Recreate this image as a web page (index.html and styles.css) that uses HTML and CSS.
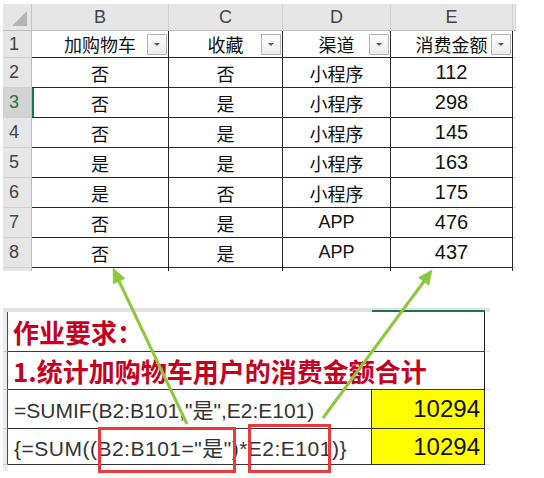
FILE: index.html
```html
<!DOCTYPE html>
<html lang="zh">
<head>
<meta charset="utf-8">
<link rel="stylesheet" href="styles.css">
</head>
<body>
<div class="page">
  <div class="top">
    <div class="corner"><span class="tri"></span></div>
    <div class="ch">B</div><div class="ch">C</div><div class="ch">D</div><div class="ch">E</div><div class="ch ex"></div>

    <div class="rh">1</div>
    <div class="c">加购物车<span class="flt"></span></div>
    <div class="c">收藏<span class="flt"></span></div>
    <div class="c">渠道<span class="flt"></span></div>
    <div class="c">消费金额<span class="flt"></span></div>
    <div class="x"></div>

    <div class="rh">2</div><div class="c">否</div><div class="c">否</div><div class="c">小程序</div><div class="c num">112</div><div class="x"></div>
    <div class="rh act">3</div><div class="c cur">否</div><div class="c">是</div><div class="c">小程序</div><div class="c num">298</div><div class="x"></div>
    <div class="rh">4</div><div class="c">否</div><div class="c">是</div><div class="c">小程序</div><div class="c num">145</div><div class="x"></div>
    <div class="rh">5</div><div class="c">是</div><div class="c">是</div><div class="c">小程序</div><div class="c num">163</div><div class="x"></div>
    <div class="rh">6</div><div class="c">是</div><div class="c">否</div><div class="c">小程序</div><div class="c num">175</div><div class="x"></div>
    <div class="rh">7</div><div class="c">否</div><div class="c">是</div><div class="c">APP</div><div class="c num">476</div><div class="x"></div>
    <div class="rh">8</div><div class="c">否</div><div class="c">是</div><div class="c">APP</div><div class="c num">437</div><div class="x"></div>

    <div class="rh tail"></div><div class="c tail"></div><div class="c tail"></div><div class="c tail"></div><div class="c tail"></div><div class="x tail"></div>
  </div>

  <div class="bottom">
    <div class="band"></div><div class="band"></div><div class="band sel"></div><div class="band"></div>

    <div class="lh"></div><div class="title">作业要求：</div><div class="bx"></div>
    <div class="lh"></div><div class="title">1.统计加购物车用户的消费金额合计</div><div class="bx"></div>
    <div class="lh"></div><div class="f">=SUMIF(B2:B101,"是",E2:E101)</div><div class="y">10294</div><div class="bx"></div>
    <div class="lh"></div><div class="f wide">{=SUM((B2:B101="是")*E2:E101)}</div><div class="y">10294</div><div class="bx"></div>
    <div class="lh end"></div><div class="btail"></div><div class="btail"></div><div class="btail"></div>
  </div>

  <svg class="overlay" width="544" height="478" viewBox="0 0 544 478">
    <g fill="#8dc63f" stroke="#8dc63f">
      <line x1="187" y1="424" x2="118" y2="279" stroke-width="3"/>
      <polygon points="113,268 125,278.5 113.2,284" stroke-width="0.5"/>
      <line x1="323" y1="418" x2="425" y2="280" stroke-width="3"/>
      <polygon points="432,270 429,285.5 418.5,277.5" stroke-width="0.5"/>
    </g>
    <g fill="none" stroke="#ea3a3d" stroke-width="3">
      <rect x="99.5" y="428.5" width="135" height="43"/>
      <rect x="249.5" y="425.5" width="80" height="46"/>
    </g>
  </svg>
</div>
</body>
</html>
```

FILE: styles.css
```css
html, body {
  margin: 0;
  padding: 0;
  background: #fff;
}

.page {
  position: relative;
  width: 544px;
  height: 478px;
  padding: 4px 0 0 3px;
  box-sizing: border-box;
  overflow: hidden;
  font-family: "Liberation Sans", "Noto Sans CJK SC", sans-serif;
}

/* ---------- top sheet ---------- */
.top {
  display: grid;
  grid-template-columns: 29px 137px 114px 108px 122px 3px;
  grid-template-rows: 27px 27px repeat(7, 30px) 3px;
}

.top > div {
  box-sizing: border-box;
  position: relative;
  display: flex;
  align-items: center;
  justify-content: center;
}

.corner {
  background: #e6e6e6;
  border-right: 1px solid #c4c4c4;
  border-bottom: 1px solid #bdbdbd;
}

.tri {
  position: absolute;
  right: 4px;
  bottom: 4px;
  width: 0;
  height: 0;
  border-left: 15px solid transparent;
  border-bottom: 15px solid #b4b4b4;
}

.ch {
  background: #e6e6e6;
  color: #444;
  font-size: 18px;
  border-right: 1px solid #d0d0d0;
  border-bottom: 1px solid #bdbdbd;
}

.ch.ex {
  border-right: 1px solid #d8d8d8;
}

.rh {
  background: #e6e6e6;
  color: #444;
  font-size: 18px;
  border-right: 1px solid #bcbcbc;
  border-bottom: 1px solid #cfcfcf;
  justify-content: flex-start !important;
  padding-left: 6px;
}

.rh.act {
  background: #d3d3d3;
  color: #217346;
}

.rh.tail {
  border-bottom: none;
}

.c {
  font-size: 18px;
  color: #111;
  border-right: 1px solid #262626;
  border-bottom: 1px solid #262626;
}

.c.num {
  font-size: 20px;
}

.c.cur {
  box-shadow: inset 2px 0 0 #217346;
}

.c.tail {
  border-bottom: none;
}

.x {
  border-bottom: 1px solid #dadada;
}

.x.tail {
  border-bottom: none;
}

.flt {
  position: absolute;
  right: 1px;
  top: 3px;
  width: 20px;
  height: 21px;
  box-sizing: border-box;
  border: 1px solid #b3b3b3;
  background: linear-gradient(#ffffff, #ebebeb);
}

.flt::after {
  content: "";
  position: absolute;
  left: 6px;
  top: 8px;
  width: 0;
  height: 0;
  border-left: 3px solid transparent;
  border-right: 3px solid transparent;
  border-top: 3px solid #5a5a5a;
}

/* ---------- bottom sheet ---------- */
.bottom {
  margin-top: 37px;
  display: grid;
  grid-template-columns: 5px 364px 113px 5px;
  grid-template-rows: 4px 40px 38px 39px 36px 6px;
}

.bottom > div {
  box-sizing: border-box;
}

.band {
  background: #e2e2e2;
}

.band.sel {
  border-bottom: 2px solid #217346;
}

.lh {
  background: #ececec;
  border-right: 1px solid #4a4a4a;
  border-bottom: 1px solid #c8c8c8;
}

.lh.end {
  border-right: none;
  border-bottom: none;
}

.title {
  grid-column: span 2;
  display: flex;
  align-items: center;
  padding-left: 5px;
  font-family: "Noto Sans CJK SC", sans-serif;
  font-weight: 700;
  font-size: 26px;
  color: #c4001e;
  border-right: 1px solid #222;
  border-bottom: 1px solid #3a3a3a;
  white-space: nowrap;
}

.f {
  display: flex;
  align-items: center;
  padding-left: 6px;
  font-size: 21px;
  color: #333;
  border-right: 1px solid #333;
  border-bottom: 1px solid #333;
  white-space: nowrap;
}

.f.wide {
  letter-spacing: 0.5px;
}

.y {
  display: flex;
  align-items: center;
  justify-content: flex-end;
  padding-right: 4px;
  background: #ffff00;
  font-size: 24px;
  color: #111;
  border-right: 1px solid #222;
  border-bottom: 1px solid #333;
}

.bx {
  border-bottom: 1px solid #dedede;
}

.btail {
  background: #fff;
}

.overlay {
  position: absolute;
  left: 0;
  top: 0;
  pointer-events: none;
}
```
